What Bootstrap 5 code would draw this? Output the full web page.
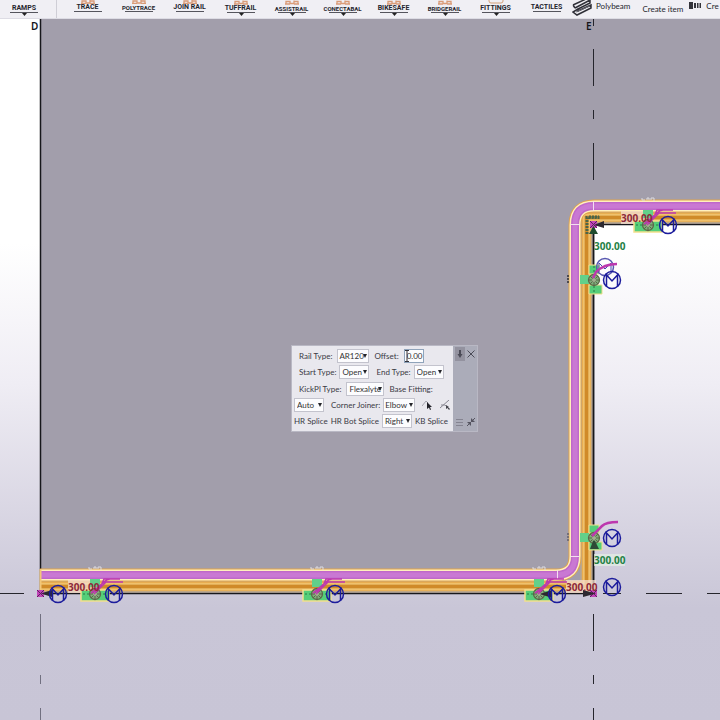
<!DOCTYPE html>
<html lang="en">
<head>
<meta charset="utf-8">
<meta name="viewport" content="width=device-width, initial-scale=1">
<title>Rail modelling</title>
<link href="https://cdn.jsdelivr.net/npm/bootstrap@5.3.0/dist/css/bootstrap.min.css" rel="stylesheet">
<style>
body{font-family:"Lato","Noto Sans",sans-serif;font-size:8px;line-height:12px;color:#303038}
.ribbon{height:19px;background:#f0eff4;border-bottom:1px solid #dddce4}
.ribbon a{color:#25252c;text-decoration:none;white-space:nowrap}
.tools{padding-left:5px}
.tool{width:51px;height:18px;font:700 7px/7px "Roboto",sans-serif}
.ramps-tool{width:57px;padding-right:8px;border-right:1px solid #cfced6}
.tool.tiny{font-size:6px}
.tool .glyph{width:16px;height:4px}
.tool .under{width:28px;height:5px}
.drop4 .glyph{height:5px}
.plain{font-size:8px;line-height:12px}
.item-tool{padding:3px 5px 0 12px}
.model{background:linear-gradient(#fff 0,#fff 32%,#efedf4 52%,#d6d3e1 73%,#c9c6d7 84%,#c8c5d6 100%)}
.model text{font-family:"Noto Sans",sans-serif}
.dim{font-size:10px;font-weight:700}
.palette{left:291px;top:326px;background:#abacb9;border:1px solid #b9b8c4}
.fields{width:161px;background:#e9e8ee;padding:1px 0 2px 2px}
.line{height:17px;gap:5px;white-space:nowrap;color:#3a3a44}
.line.tight{height:16px;gap:3px}
.inset{padding-left:5px}
.pick{height:14px}
.pick::after{content:"";position:absolute;right:2px;top:5px;border:2px solid transparent;border-top:4px solid #24242a;border-bottom:0;pointer-events:none}
.pick select,.num{height:14px;width:30px;font-size:8px;line-height:12px;border:1px solid #c3c3cd;background:#fcfcfe;color:#333;padding:0 0 0 2px;appearance:none;border-radius:0;display:block}
.pick .wide{width:38px}
.pick .full{width:32px;padding-left:1px}
.num{width:20px;border-color:#8fa3ba}
.side{width:24px;padding:1px 2px}
.side button,.line button{border:0;background:none;padding:0;line-height:0}
.side .pin{background:#93929f;width:10px;height:14px}
.caret-beam{left:112px;top:4px}
</style>
<script src="https://cdn.jsdelivr.net/npm/bootstrap@5.3.0/dist/js/bootstrap.bundle.min.js"></script>
</head>
<body class="vh-100 d-flex flex-column overflow-hidden">
<svg width="0" height="0" class="position-absolute" aria-hidden="true">
  <symbol id="g-rail" viewBox="0 0 16 4"><path d="M2 3.500V1h4v2h4V0M10 1h4v2.500M1 3.500h5M10 3.500h5" fill="none" stroke="#d99b77" stroke-width="1.300"/></symbol>
  <symbol id="u-line" viewBox="0 0 28 5"><path d="M0 .5H28" stroke="#55555d"/></symbol>
  <symbol id="u-drop" viewBox="0 0 28 5"><path d="M0 .5H28" stroke="#55555d"/><path d="M12 1h5l-2.500 3z" fill="#222"/></symbol>
  <symbol id="tag" overflow="visible"><g fill="none" stroke="#1c1c9c" stroke-width="1.500"><circle r="8.500"/><path d="M-5.500 6.500V-5L0 1l5.500-6V6.500"/></g></symbol>
  <symbol id="hub" overflow="visible"><circle r="5.500" fill="#7fae7a" stroke="#5d6a49" stroke-width="1.300"/><path d="M-6 0H6M0-6V6M-4-4 4 4M-4 4 4-4" stroke="#5b654a"/><circle r="2" fill="#a0b08e"/></symbol>
  <symbol id="post" overflow="visible">
    <path d="M-14-4H14V7H-14Z" fill="#55ce79" stroke="#f3df8d" stroke-width="1.500"/>
    <path d="M-5-15H5V-7H-5Z" fill="#62d08a"/>
    <path d="M-12 0h24" stroke="#297f46" stroke-dasharray="2 2"/>
    <use href="#hub"/>
    <path d="M-4-1 9-12Q12-15 15-15H24M-1 0 11-12H28M-4-1 5-6 9-15H25" fill="none" stroke="#bd38ae" stroke-width="1.500"/>
    <path d="M-6-27v2h3M-1-25v-2h2v2M3-25v-2h3v3" fill="none" stroke="#dddce0" stroke-width="1"/>
  </symbol>
</svg>

<nav class="ribbon d-flex flex-shrink-0 overflow-hidden" aria-label="Tools">
  <a href="#" class="tool ramps-tool flex-shrink-0 d-flex flex-column align-items-center drop4"><span class="glyph"></span>RAMPS<svg class="under"><use href="#u-drop"/></svg></a>
  <div class="tools d-flex flex-shrink-0">
    <a href="#" class="tool d-flex flex-column align-items-center"><svg class="glyph"><use href="#g-rail"/></svg>TRACE<svg class="under"><use href="#u-line"/></svg></a>
    <a href="#" class="tool tiny d-flex flex-column align-items-center"><svg class="glyph"><use href="#g-rail"/></svg>POLYTRACE<svg class="under"><use href="#u-line"/></svg></a>
    <a href="#" class="tool d-flex flex-column align-items-center"><svg class="glyph"><use href="#g-rail"/></svg>JOIN RAIL<svg class="under"><use href="#u-line"/></svg></a>
    <a href="#" class="tool drop4 d-flex flex-column align-items-center"><svg class="glyph"><use href="#g-rail"/></svg>TUFFRAIL<svg class="under"><use href="#u-drop"/></svg></a>
    <a href="#" class="tool tiny drop4 d-flex flex-column align-items-center"><svg class="glyph"><use href="#g-rail"/></svg>ASSISTRAIL<svg class="under"><use href="#u-drop"/></svg></a>
    <a href="#" class="tool tiny drop4 d-flex flex-column align-items-center"><svg class="glyph"><use href="#g-rail"/></svg>CONECTABAL<svg class="under"><use href="#u-drop"/></svg></a>
    <a href="#" class="tool drop4 d-flex flex-column align-items-center"><svg class="glyph"><use href="#g-rail"/></svg>BIKESAFE<svg class="under"><use href="#u-drop"/></svg></a>
    <a href="#" class="tool tiny drop4 d-flex flex-column align-items-center"><svg class="glyph"><use href="#g-rail"/></svg>BRIDGERAIL<svg class="under"><use href="#u-drop"/></svg></a>
    <a href="#" class="tool drop4 d-flex flex-column align-items-center"><svg class="glyph" viewBox="0 0 16 5"><path d="M1-2V1Q1 3 3 3H13Q15 3 15 1V-2" fill="none" stroke="#d3a078"/></svg>FITTINGS<svg class="under"><use href="#u-drop"/></svg></a>
    <a href="#" class="tool d-flex flex-column align-items-center"><span class="glyph"></span>TACTILES<svg class="under"><use href="#u-line"/></svg></a>
  </div>
  <div class="d-flex flex-shrink-0">
    <a href="#" class="plain d-flex"><svg width="20" height="16" viewBox="0 0 20 16" class="me-1"><path d="M1 5 14-1M3 8 18 0M1 5 3 8M18 0V3L6 9V11L19 5V8L5 15 1 12 6 9" fill="none" stroke="#303038" stroke-width="1.500"/><path d="M4 12 18 6" stroke="#6b6b75"/></svg>Polybeam</a>
    <a href="#" class="plain item-tool">Create item</a>
    <a href="#" class="plain d-flex"><svg width="14" height="12" viewBox="0 0 14 12" class="me-1"><path d="M1 2h4v7H1zM6 3h2v5H6zM9 3h1.500v5H9zM11.500 3H13v5h-1.500z" fill="#34343b"/></svg>Cre</a>
  </div>
</nav>

<main class="model position-relative flex-grow-1 overflow-hidden">
<svg width="100%" height="100%" class="d-block" role="img" aria-label="Plan of the handrail on its slab">
<svg y="-19" overflow="visible" width="100%" height="100%">
  <path d="M41 18H3000V224H594V593H41Z" fill="#a29eab"/>
  <path d="M40.500 18V593M40 593.500H594.500M593.500 593V224.500H3000" fill="none" stroke="#17171b" stroke-width="1.500"/>
  <path d="M593.500 18V26M593.500 49V86M593.500 110V119M593.500 143V180M593.500 614V651M593.500 675V684M593.500 708V740M0 593.500H24M646 593.500H682M707 593.500H740M603 593.500H621" stroke="#25252c" fill="none"/>
  <path d="M40.500 614V651M40.500 675V684M40.500 708V740" stroke="#717080" fill="none"/>
  <g font-size="10" font-weight="600" fill="#15151a"><text x="31" y="30">D</text><text x="586" y="30">E</text></g>

  <g fill="none">
    <path d="M40 586.500H586.500V217.500H3000" stroke="#bda787" stroke-width="12"/>
    <path d="M40 586H586.500V217H3000" stroke="#e8ad50" stroke-width="9"/>
    <path d="M40 586.500H586.500V217.500H3000" stroke="#f7d587" stroke-width="6"/>
    <path d="M40 586.500H586.500V217.500H3000" stroke="#d08a28" stroke-width="4"/>
    <path d="M40 590.500H590.500V221.500H3000" stroke="#e6b05b"/>
    <path d="M40 575H556Q575 575 575 556V225Q575 206 594 206H3000" stroke="#dfa34e" stroke-width="13"/>
    <path d="M40 575H556Q575 575 575 556V225Q575 206 594 206H3000" stroke="#fff0bd" stroke-width="11"/>
    <path d="M40 575H556Q575 575 575 556V225Q575 206 594 206H3000" stroke="#bf68ca" stroke-width="8"/>
    <path d="M40 575H556Q575 575 575 556V225Q575 206 594 206H3000" stroke="#c978d3" stroke-width="5"/>
    <path d="M557.500 570V580M570 556.500H580M593.500 201V211M570 224.500H580" stroke="#f5dff0"/>
    <path d="M40.500 569V593" stroke="#f3c778" stroke-width="2"/>
    <path d="M593.500 224V593" stroke="#17171b" stroke-width="1.500"/>
  </g>

  <g fill="#f5dfd0" fill-opacity=".75"><path d="M68 580H97V593H68zM566 580H596V593H566zM621 211H650V224H621z"/></g>
  <use href="#post" x="95" y="594"/><use href="#post" x="317" y="594"/><use href="#post" x="539" y="594"/>
  <use href="#post" x="648" y="225"/>

  <g transform="translate(594 280)">
    <path d="M-5-15H5V-6H-5ZM-5 5H8V14H-5Z" fill="#55ce79" stroke="#f3df8d"/><path d="M-14-5h9v9h-9z" fill="#62d08a"/><path d="M0-14V13" stroke="#287a43" stroke-dasharray="2 2"/><use href="#hub"/>
    <path d="M-27-4h2M-27-1h2M-27 2h2" stroke="#2e2e36" stroke-width="1.500"/>
    <circle cx="11" cy="-13" r="8.500" fill="none" stroke="#5858b0" stroke-width="1.500"/><path d="M5-8V-17L11-11l6-6V-8" fill="none" stroke="#4646b0"/>
    <path d="M-1-2 2-8Q10-16 23-16" fill="none" stroke="#bd38ae" stroke-width="2.500"/>
  </g>
  <g transform="translate(594 538)">
    <path d="M-5-13H5V-5H-5ZM-5 4H8V12H-5Z" fill="#55ce79" stroke="#f3df8d"/><path d="M-14-5h9v9h-9z" fill="#62d08a"/><use href="#hub"/><path d="M-4 11-1 3h2L5 11Z" fill="#2d4b36"/>
    <path d="M-27-4h2M-27-1h2M-27 2h2" stroke="#64606c" stroke-width="1.500"/>
    <path d="M-2-2 8-12Q12-16 24-16" fill="none" stroke="#bd38ae" stroke-width="2.500"/>
  </g>

  <g fill="#c245b8"><path d="M37 590h7v7h-7zM590 590h7v7h-7zM590 221h7v7h-7z"/></g>
  <path d="M37 590 44 597M44 590 37 597M590 590 597 597M597 590 590 597M590 221 597 228M597 221 590 228" stroke="#5e2260"/>
  <path d="M587 234V217.500H600M589 217H599" fill="none" stroke="#4b6548" stroke-width="3" stroke-dasharray="2 1"/>
  <g fill="#2c2930"><path d="M41 593.500 52 590V597ZM594 225 604 221V228ZM596 593.500 583 590V597Z"/><path d="M593.500 226 589 234H598Z" fill="#1f4b2e"/><path d="M540 594 552 590V598Z"/></g>

  <path d="M594 554H625V566H594z" fill="#e4efe4" fill-opacity=".7"/>
  <g class="dim" fill="#8d2839"><text x="68" y="591">300.00</text><text x="566" y="591">300.00</text><text x="621" y="222">300.00</text></g>
  <g class="dim" fill="#238145"><text x="594" y="250">300.00</text><text x="594" y="564">300.00</text></g>
  <g><use href="#tag" x="58" y="594"/><use href="#tag" x="114" y="594"/><use href="#tag" x="335" y="594"/><use href="#tag" x="557" y="594"/><use href="#tag" x="612" y="587"/><use href="#tag" x="612" y="538"/><use href="#tag" x="612" y="280"/><use href="#tag" x="668" y="225"/></g>
</svg>
</svg>

<form class="palette position-absolute d-flex" aria-label="Rail properties">
  <div class="fields">
    <div class="line inset d-flex align-items-center"><label for="rail">Rail Type:</label><span class="pick position-relative"><select id="rail" class="full"><option>AR120</option></select></span><label for="offset">Offset:</label><input id="offset" class="num" value="0.00"></div>
    <div class="line tight inset d-flex align-items-center"><label for="start">Start Type:</label><span class="pick position-relative"><select id="start"><option>Open</option></select></span><label for="end" class="ms-1">End Type:</label><span class="pick position-relative"><select id="end"><option>Open</option></select></span></div>
    <div class="line inset d-flex align-items-center"><label for="kick">KickPl Type:</label><span class="pick position-relative"><select id="kick" class="wide"><option>Flexalyte</option></select></span><label for="base">Base Fitting:</label></div>
    <div class="line tight d-flex align-items-center"><span class="pick position-relative"><select id="base"><option>Auto</option></select></span><label for="joiner" class="ms-1">Corner Joiner:</label><span class="pick position-relative"><select id="joiner" class="full"><option>Elbow</option></select></span>
      <button type="button" class="ms-1" aria-label="Pick line"><svg width="11" height="10" viewBox="0 0 11 10"><path d="M0 6 4 1 6 3" fill="none" stroke="#a5a5af"/><path d="M5 2V9L7 7.500 8 10 9 9.500 8 7H10Z" fill="#222229"/></svg></button>
      <button type="button" class="ms-1" aria-label="Pick joint"><svg width="11" height="10" viewBox="0 0 11 10"><path d="M0 8 9 0M1 5H5L9 9" fill="none" stroke="#888792"/><path d="M6 5V9L7.500 8 9 10 10 9 8 7H9Z" fill="#44444b"/></svg></button></div>
    <div class="line tight d-flex align-items-center"><span>HR Splice</span><label for="splice">HR Bot Splice</label><span class="pick position-relative"><select id="splice"><option>Right</option></select></span><span>KB Splice</span></div>
  </div>
  <div class="side d-flex flex-column justify-content-between">
    <div class="d-flex justify-content-between align-items-center"><button type="button" class="pin" aria-label="Pin"><svg width="8" height="10" viewBox="0 0 8 10"><path d="M3 1H5V5H6.500L4 9 1.500 5H3Z" fill="#4b4b57"/></svg></button><button type="button" aria-label="Close"><svg width="8" height="8" viewBox="0 0 8 8"><path d="M.5.500 7.500 7.500M7.500.500.500 7.500" stroke="#4b4b57"/></svg></button></div>
    <div class="d-flex justify-content-between align-items-center pb-1"><button type="button" aria-label="List"><svg width="8" height="7" viewBox="0 0 8 7"><path d="M1 .5H8M1 3.500H8M1 6.500H8" stroke="#858491"/></svg></button><button type="button" aria-label="Shrink"><svg width="8" height="8" viewBox="0 0 8 8"><path d="M0 4H4V8ZM4 0V4H8Z" fill="#555460"/><path d="M0 8 3 5M8 0 5 3" stroke="#555460"/></svg></button></div>
  </div>
  <svg class="caret-beam position-absolute" width="6" height="12" viewBox="0 0 6 12"><path d="M1 .5H5M3 1V11M1 11.500H5" stroke="#33333b" fill="none"/></svg>
</form>
</main>
</body>
</html>
